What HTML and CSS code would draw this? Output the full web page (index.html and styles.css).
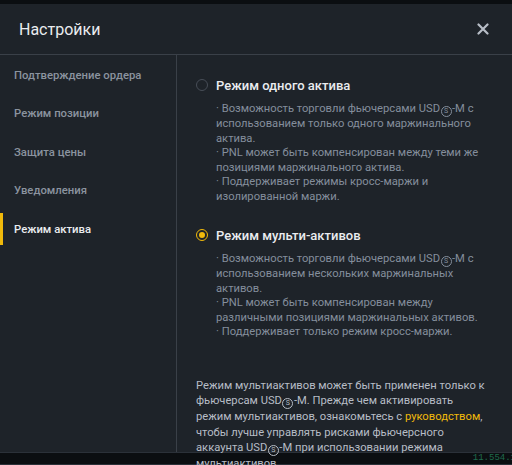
FILE: index.html
```html
<!DOCTYPE html>
<html lang="ru">
<head>
    <meta charset="UTF-8">
    <meta name="viewport" content="width=device-width, initial-scale=1.0">
    <title>Настройки</title>
    <link rel="stylesheet" href="styles.css">
</head>
<body>

    <div class="modal">
        <div class="modal-header">
            <h2 class="modal-title">Настройки</h2>
            <button class="close-btn" aria-label="Закрыть">
                <svg width="12" height="12" viewBox="0 0 12 12">
                    <path d="M1.5 1.5 L10.5 10.5 M10.5 1.5 L1.5 10.5" stroke="#b7bdc6" stroke-width="2.2" stroke-linecap="round"/>
                </svg>
            </button>
        </div>

        <div class="modal-body">
            <ul class="sidebar">
                <li class="side-item">Подтверждение ордера</li>
                <li class="side-item">Режим позиции</li>
                <li class="side-item">Защита цены</li>
                <li class="side-item">Уведомления</li>
                <li class="side-item active">Режим актива</li>
            </ul>

            <div class="content">
                <div class="option">
                    <label class="radio-row">
                        <span class="radio"></span>
                        <span class="option-title">Режим одного актива</span>
                    </label>
                    <p class="option-desc">
                        · Возможность торговли фьючерсами USD<span class="cs">S</span>-M с использованием только одного маржинального актива.<br>
                        · PNL может быть компенсирован между теми же позициями маржинального актива.<br>
                        · Поддерживает режимы кросс-маржи и изолированной маржи.
                    </p>
                </div>

                <div class="option">
                    <label class="radio-row">
                        <span class="radio checked"></span>
                        <span class="option-title">Режим мульти-активов</span>
                    </label>
                    <p class="option-desc">
                        · Возможность торговли фьючерсами USD<span class="cs">S</span>-M с использованием нескольких маржинальных активов.<br>
                        · PNL может быть компенсирован между различными позициями маржинальных активов.<br>
                        · Поддерживает только режим кросс-маржи.
                    </p>
                </div>

                <p class="note">
                    Режим мультиактивов может быть применен только к фьючерсам USD<span class="cs">S</span>-M. Прежде чем активировать режим мультиактивов, ознакомьтесь с <a href="#" class="link">руководством</a>, чтобы лучше управлять рисками фьючерсного аккаунта USD<span class="cs">S</span>-M при использовании режима мультиактивов.
                </p>
            </div>
        </div>
    </div>

    <div class="footer-bar">
        <span class="ping">11.554.1</span>
    </div>

</body>
</html>
```

FILE: styles.css
```css
html, body {
  margin: 0;
  padding: 0;
}

body {
  background: #0b0e11;
  font-family: Roboto, "Noto Sans", sans-serif;
  height: 465px;
  overflow: hidden;
  position: relative;
}

.modal {
  margin-top: 4px;
  height: 448px;
  background: #1e2329;
  display: flex;
  flex-direction: column;
}

.modal-header {
  height: 50px;
  flex: none;
  display: flex;
  align-items: center;
  justify-content: space-between;
  padding: 0 23px 0 19px;
  border-bottom: 1px solid #3a4048;
}

.modal-title {
  margin: 0;
  font-size: 16px;
  font-weight: 400;
  color: #eaecef;
}

.close-btn {
  border: none;
  background: none;
  padding: 0;
  cursor: pointer;
  display: flex;
}

.modal-body {
  flex: 1;
  display: flex;
  min-height: 0;
}

.sidebar {
  list-style: none;
  margin: 0;
  padding: 1px 0 0 0;
  width: 176px;
  flex: none;
  border-right: 1px solid #3a4048;
}

.side-item {
  position: relative;
  height: 38.5px;
  display: flex;
  align-items: center;
  padding-left: 14px;
  font-size: 11.3px;
  font-weight: 500;
  color: #8b939f;
  cursor: pointer;
}

.side-item.active {color: #eaecef;}

.side-item.active::before {
  content: "";
  position: absolute;
  left: 0;
  top: 3px;
  bottom: 4px;
  width: 3px;
  background: #f0b90b;
}

.content {
  flex: 1;
  padding: 21px 24px 0 19px;
}

.option {margin-bottom: 22px;}

.radio-row {
  display: flex;
  align-items: center;
  height: 18px;
  cursor: pointer;
}

.radio {
  width: 10px;
  height: 10px;
  border: 1.5px solid #474d57;
  border-radius: 50%;
  margin-right: 8px;
  position: relative;
}

.radio.checked {border-color: #f0b90b;}

.radio.checked::after {
  content: "";
  position: absolute;
  left: 2px;
  top: 2px;
  width: 6px;
  height: 6px;
  border-radius: 50%;
  background: #f0b90b;
}

.option-title {
  font-size: 13px;
  font-weight: 500;
  color: #eaecef;
}

.option-desc {
  margin: 8px 0 0 20px;
  font-size: 11.2px;
  line-height: 14.5px;
  color: #848e9c;
}

.note {
  margin: 38px -3px 0 0;
  font-size: 11.2px;
  line-height: 15.6px;
  color: #b7bdc6;
}

/* circled S of USDⓈ-M */
.cs {
  display: inline-block;
  width: 9px;
  height: 9px;
  line-height: 9px;
  border: 1px solid currentColor;
  border-radius: 50%;
  font-size: 7px;
  text-align: center;
  vertical-align: -1px;
  margin: 0 0.5px;
}

.link {
  color: #f0b90b;
  text-decoration: none;
}

.footer-bar {
  position: absolute;
  left: 0;
  right: 0;
  top: 452px;
  height: 11px;
  border-top: 1px solid #2b3139;
  border-bottom: 1px solid #2b3139;
  z-index: -1;
}

.ping {
  position: absolute;
  right: -4px;
  top: 0;
  font-size: 9px;
  line-height: 10px;
  color: #1f6b4c;
  font-family: "Liberation Mono", monospace;
}
```
